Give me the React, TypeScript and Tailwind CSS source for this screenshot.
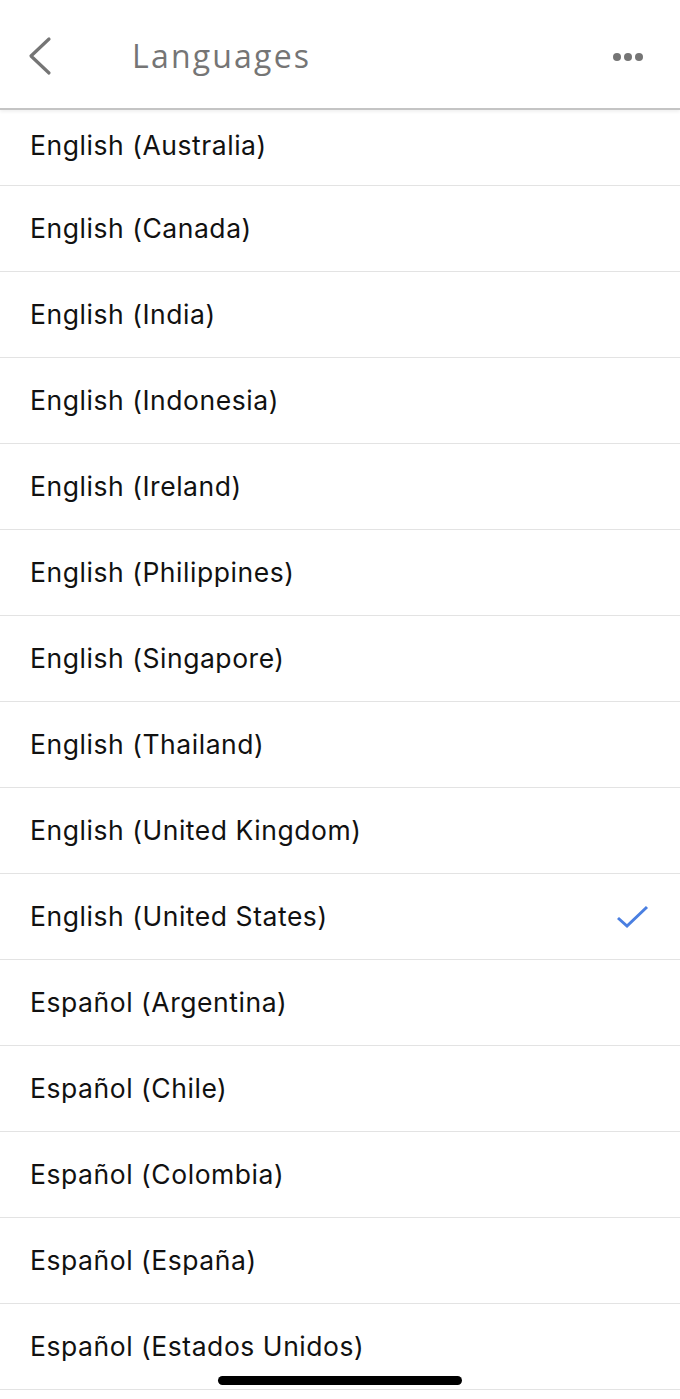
const languages = [
  "English (Australia)",
  "English (Canada)",
  "English (India)",
  "English (Indonesia)",
  "English (Ireland)",
  "English (Philippines)",
  "English (Singapore)",
  "English (Thailand)",
  "English (United Kingdom)",
  "English (United States)",
  "Español (Argentina)",
  "Español (Chile)",
  "Español (Colombia)",
  "Español (España)",
  "Español (Estados Unidos)",
];

const selected = "English (United States)";

export default function App() {
  return (
    <div className="relative w-[680px] h-[1399px] overflow-hidden bg-white font-['Inter',sans-serif]">
      {/* Header */}
      <div className="h-[110px] flex items-center border-b-2 border-[#c4c4c4] shadow-[0_2px_3px_rgba(0,0,0,0.06)] relative z-10 bg-white">
        <div className="w-[132px] pl-[26px] pt-[4px] flex items-center">
          <svg width="28" height="40" viewBox="0 0 28 40" fill="none">
            <path d="M23 3 L5 20 L23 37" stroke="#757575" strokeWidth="3.2" strokeLinecap="round" strokeLinejoin="round" />
          </svg>
        </div>
        <div className="flex-1 text-[32px] text-[#757575] font-['Open_Sans',sans-serif] tracking-[2.2px] pt-[3px]">
          Languages
        </div>
        <div className="pr-[37px] flex gap-[3px] pt-[6px]">
          <span className="w-[8px] h-[8px] rounded-full bg-[#757575]" />
          <span className="w-[8px] h-[8px] rounded-full bg-[#757575]" />
          <span className="w-[8px] h-[8px] rounded-full bg-[#757575]" />
        </div>
      </div>

      {/* List */}
      <div className="flex flex-col">
        {languages.map((lang, i) => (
          <div
            key={lang}
            className={`flex items-center justify-between pl-[30px] pr-[30px] border-b border-[#e3e3e3] ${
              i === 0 ? "h-[76px] pb-[4px]" : "h-[86px]"
            }`}
          >
            <span className="text-[26.5px] tracking-[0.55px] text-[#111]">{lang}</span>
            {lang === selected && (
              <svg width="34" height="26" viewBox="0 0 34 26" fill="none">
                <path d="M2 14 L11 22 L31 3" stroke="#4a7fe1" strokeWidth="3" strokeLinejoin="miter" />
              </svg>
            )}
          </div>
        ))}
      </div>

      {/* Home indicator */}
      <div className="absolute left-[218px] top-[1376px] w-[244px] h-[9px] rounded-full bg-black" />
    </div>
  );
}
